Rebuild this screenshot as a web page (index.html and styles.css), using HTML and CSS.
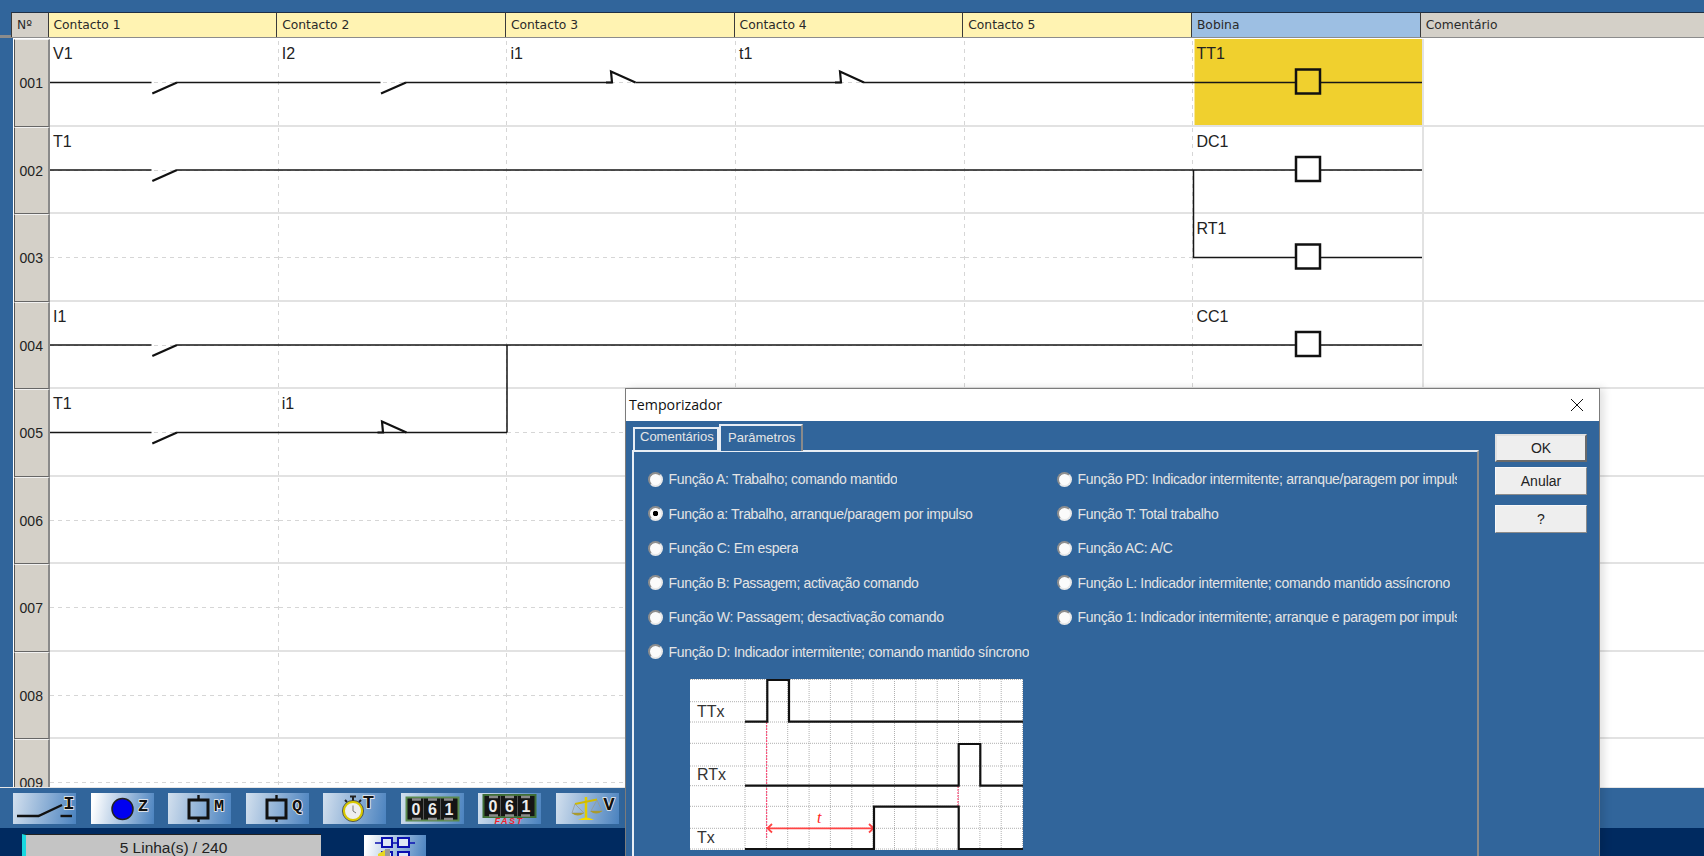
FILE: index.html
```html
<!DOCTYPE html>
<html lang="pt">
<head>
    <meta charset="UTF-8">
    <title>Temporizador</title>
    <link rel="stylesheet" href="styles.css">
</head>
<body>
    <div class="app">
        <div class="head">
            <div class="hcell hnum">Nº</div>
            <div class="hcell hcontact">Contacto 1</div>
            <div class="hcell hcontact">Contacto 2</div>
            <div class="hcell hcontact">Contacto 3</div>
            <div class="hcell hcontact">Contacto 4</div>
            <div class="hcell hcontact">Contacto 5</div>
            <div class="hcell hcoil">Bobina</div>
            <div class="hcell hnote">Comentário</div>
        </div>

        <div class="rows">
            <div class="row">
                <div class="num">001</div>
                <div class="cell">V1</div><div class="cell">I2</div><div class="cell">i1</div><div class="cell">t1</div><div class="cell"></div>
                <div class="cell coil active">TT1</div><div class="cell note"></div>
            </div>
            <div class="row">
                <div class="num">002</div>
                <div class="cell">T1</div><div class="cell"></div><div class="cell"></div><div class="cell"></div><div class="cell"></div>
                <div class="cell coil">DC1</div><div class="cell note"></div>
            </div>
            <div class="row">
                <div class="num">003</div>
                <div class="cell"></div><div class="cell"></div><div class="cell"></div><div class="cell"></div><div class="cell"></div>
                <div class="cell coil">RT1</div><div class="cell note"></div>
            </div>
            <div class="row">
                <div class="num">004</div>
                <div class="cell">I1</div><div class="cell"></div><div class="cell"></div><div class="cell"></div><div class="cell"></div>
                <div class="cell coil">CC1</div><div class="cell note"></div>
            </div>
            <div class="row">
                <div class="num">005</div>
                <div class="cell">T1</div><div class="cell">i1</div><div class="cell"></div><div class="cell"></div><div class="cell"></div>
                <div class="cell coil"></div><div class="cell note"></div>
            </div>
            <div class="row">
                <div class="num">006</div>
                <div class="cell"></div><div class="cell"></div><div class="cell"></div><div class="cell"></div><div class="cell"></div>
                <div class="cell coil"></div><div class="cell note"></div>
            </div>
            <div class="row">
                <div class="num">007</div>
                <div class="cell"></div><div class="cell"></div><div class="cell"></div><div class="cell"></div><div class="cell"></div>
                <div class="cell coil"></div><div class="cell note"></div>
            </div>
            <div class="row">
                <div class="num">008</div>
                <div class="cell"></div><div class="cell"></div><div class="cell"></div><div class="cell"></div><div class="cell"></div>
                <div class="cell coil"></div><div class="cell note"></div>
            </div>
            <div class="row">
                <div class="num">009</div>
                <div class="cell"></div><div class="cell"></div><div class="cell"></div><div class="cell"></div><div class="cell"></div>
                <div class="cell coil"></div><div class="cell note"></div>
            </div>

            <!-- wires of the ladder, drawn over the grid -->
            <svg class="wires" width="1704" height="748" viewBox="0 0 1704 748">
                <path class="wire" d="M50 44.5H151.5M177 44.5H380.5M406 44.5H612M635.5 44.5H841M864 44.5H1422"/>
                <path class="blade" d="M152.3 55.5L177 44.5M381 55.5L406 44.5M606 44.5H612L611 33.5L635.5 44.5M835 44.5H841L840 33.5L864 44.5"/>
                <path class="wire" d="M50 132H151.5M177 132H1422M1193.5 132V219.5H1422"/>
                <path class="blade" d="M152.3 143L177 132"/>
                <path class="wire" d="M50 307H151.5M177 307H1422M507 307V394.5"/>
                <path class="blade" d="M152.3 318L177 307"/>
                <path class="wire" d="M50 394.5H151.5M177 394.5H507"/>
                <path class="blade" d="M152.3 405.5L177 394.5M377.5 394.5H383L382 383.5L406.5 394.5"/>
                <rect class="box on" x="1296" y="31.5" width="24" height="24"/>
                <rect class="box" x="1296" y="119" width="24" height="24"/>
                <rect class="box" x="1296" y="206.5" width="24" height="24"/>
                <rect class="box" x="1296" y="294" width="24" height="24"/>
            </svg>
        </div>

        <div class="toolbar">
            <button class="tool">
                <svg width="63" height="31" viewBox="0 0 63 31">
                    <path class="ink" d="M4 23H25.5L49 12"/>
                    <text class="glyph" x="56" y="16" text-anchor="middle">I</text>
                    <path class="ink" d="M47.5 23H59"/>
                </svg>
            </button>
            <button class="tool bright">
                <svg width="63" height="31" viewBox="0 0 63 31">
                    <circle cx="31.5" cy="16" r="10.5" fill="#0000f0" stroke="#222" stroke-width="1.5"/>
                    <text class="glyph small" x="52" y="18" text-anchor="middle">Z</text>
                </svg>
            </button>
            <button class="tool">
                <svg width="63" height="31" viewBox="0 0 63 31">
                    <path class="ink" d="M30.5 2V7M30.5 25V29"/>
                    <rect class="coilbox" x="21" y="7" width="19" height="18"/>
                    <text class="glyph small" x="51" y="18" text-anchor="middle">M</text>
                </svg>
            </button>
            <button class="tool">
                <svg width="63" height="31" viewBox="0 0 63 31">
                    <path class="ink" d="M30.5 2V7M30.5 25V29"/>
                    <rect class="coilbox" x="21" y="7" width="19" height="18"/>
                    <text class="glyph small" x="51" y="18" text-anchor="middle">Q</text>
                </svg>
            </button>
            <button class="tool">
                <svg width="63" height="31" viewBox="0 0 63 31">
                    <path d="M27 3.5H33M30 3.5V8M22 7L24 9M38 7L36 9" stroke="#222" stroke-width="2" fill="none"/>
                    <circle cx="30" cy="18" r="9.2" fill="#eee" stroke="#d8c800" stroke-width="2.4"/>
                    <circle cx="30" cy="18" r="10.6" fill="none" stroke="#333" stroke-width=".7"/>
                    <path d="M30 18V12.5M30 18L33 20" stroke="#777" stroke-width="1" fill="none"/>
                    <text class="glyph" x="45.5" y="14.5" text-anchor="middle">T</text>
                </svg>
            </button>
            <button class="tool">
                <svg width="63" height="31" viewBox="0 0 63 31">
                    <rect x="5.5" y="4.5" width="52" height="23" fill="#151515" stroke="#5b8a4e" stroke-width="2"/>
                    <path class="ghost" d="M11 6.5H20M27 6.5H36M43 6.5H52M11 26H20M27 26H36M43 26H52"/>
                    <path d="M22.5 5V27M39.5 5V27" stroke="#555" stroke-width="1"/>
                    <text class="digit" x="15" y="22" text-anchor="middle">0</text>
                    <text class="digit" x="31.5" y="22" text-anchor="middle">6</text>
                    <text class="digit" x="48" y="22" text-anchor="middle">1</text>
                </svg>
            </button>
            <button class="tool">
                <svg width="63" height="31" viewBox="0 0 63 31">
                    <rect x="5.5" y="2" width="52" height="22" fill="#151515" stroke="#3f6e36" stroke-width="2"/>
                    <path class="ghost" d="M11 4H20M27 4H36M43 4H52M11 22.5H20M27 22.5H36M43 22.5H52"/>
                    <path d="M22.5 3V23M39.5 3V23" stroke="#555" stroke-width="1"/>
                    <text class="digit" x="15" y="19" text-anchor="middle">0</text>
                    <text class="digit" x="31.5" y="19" text-anchor="middle">6</text>
                    <text class="digit" x="48" y="19" text-anchor="middle">1</text>
                    <text class="fast" x="31" y="30.5" text-anchor="middle">FAST</text>
                </svg>
            </button>
            <button class="tool">
                <svg width="63" height="31" viewBox="0 0 63 31">
                    <path d="M30 4V25" stroke="#e2cc00" stroke-width="2.5"/>
                    <path d="M19 11L41 6.5" stroke="#d0ba00" stroke-width="1.8"/>
                    <path d="M19 11L16 20H28ZM41 7L35 18H46Z" fill="none" stroke="#998" stroke-width=".7"/>
                    <path d="M15.5 20H28Q22 25 15.5 20ZM34 18H46.5Q40 23 34 18Z" fill="#a89a30"/>
                    <path d="M22 27Q30 22 38 27Z" fill="#f2dc00"/>
                    <text class="glyph" x="53" y="16.5" text-anchor="middle">V</text>
                </svg>
            </button>
        </div>

        <div class="status">
            <div class="lines">5 Linha(s) / 240</div>
            <button class="netbtn">
                <svg width="62" height="21" viewBox="0 0 62 21">
                    <path d="M11 8H51" stroke="#0a10b0" stroke-width="1.6"/>
                    <path d="M18 3H28V12H18ZM34 3H45V12H34ZM18 17H28V24H18ZM34 17H45V24H34Z" fill="#dfe8f4" stroke="#0a10b0" stroke-width="2"/>
                    <path d="M21 14H26V21H21Z" fill="#9a9a9a"/>
                    <path d="M14 19L21 15V21H14Z" fill="#e8d820"/>
                </svg>
            </button>
        </div>

        <!-- dialog window -->
        <div class="dialog">
            <div class="titlebar">
                <span>Temporizador</span>
                <svg width="14" height="14" viewBox="0 0 14 14"><path d="M1 1L13 13M13 1L1 13" stroke="#111" stroke-width="1" fill="none"/></svg>
            </div>
            <div class="dlgbody">
                <div class="tabs-wrap">
                    <div class="tabs">
                        <div class="tab">Comentários</div>
                        <div class="tab current">Parâmetros</div>
                    </div>
                    <div class="sheet">
                        <div class="options">
                            <label class="opt"><input type="radio" name="fn"><span>Função A: Trabalho; comando mantido</span></label>
                            <label class="opt"><input type="radio" name="fn"><span>Função PD: Indicador intermitente; arranque/paragem por impulso</span></label>
                            <label class="opt"><input type="radio" name="fn" checked><span>Função a: Trabalho, arranque/paragem por impulso</span></label>
                            <label class="opt"><input type="radio" name="fn"><span>Função T: Total trabalho</span></label>
                            <label class="opt"><input type="radio" name="fn"><span>Função C: Em espera</span></label>
                            <label class="opt"><input type="radio" name="fn"><span>Função AC: A/C</span></label>
                            <label class="opt"><input type="radio" name="fn"><span>Função B: Passagem; activação comando</span></label>
                            <label class="opt"><input type="radio" name="fn"><span>Função L: Indicador intermitente; comando mantido assíncrono</span></label>
                            <label class="opt"><input type="radio" name="fn"><span>Função W: Passagem; desactivação comando</span></label>
                            <label class="opt"><input type="radio" name="fn"><span>Função 1: Indicador intermitente; arranque e paragem por impulso</span></label>
                            <label class="opt wide"><input type="radio" name="fn"><span>Função D: Indicador intermitente; comando mantido síncrono</span></label>
                        </div>
                        <svg class="chart" width="333" height="171" viewBox="0 0 333 171">
                            <rect width="333" height="171" fill="#fff"/>
                            <path class="dots" d="M55 0V171M76.4 0V171M97.7 0V171M119.1 0V171M140.4 0V171M161.8 0V171M183.1 0V171M204.5 0V171M225.8 0V171M247.2 0V171M268.5 0V171M289.9 0V171M311.2 0V171M332.5 0V171"/>
                            <path class="dots" d="M0 .5H333M0 22.7H333M0 43H333M0 64.3H333M0 87H333M0 106.7H333M0 127.3H333M0 149.3H333M0 170H333"/>
                            <path class="redline" d="M76.7 43V160M268 107V127"/>
                            <path class="arrow" d="M78 149.3H183M82 145L77.5 149.3L82 153.5M179 145L183.5 149.3L179 153.5"/>
                            <path class="pulse" d="M55 42.7H77.3V1H99V42.7H333M55 106.7H268.7V65H290.3V106.7H333M55 170H184V127.7H268.7V170H333"/>
                            <text class="chartlabel" x="7" y="38">TTx</text>
                            <text class="chartlabel" x="7" y="100.5">RTx</text>
                            <text class="chartlabel" x="7" y="164">Tx</text>
                            <text class="chart-t" x="127" y="144">t</text>
                        </svg>
                    </div>
                </div>
                <div class="actions">
                    <button class="btn first">OK</button>
                    <button class="btn">Anular</button>
                    <button class="btn last">?</button>
                </div>
            </div>
        </div>
    </div>
</body>
</html>
```

FILE: styles.css
```css
* {
    box-sizing: border-box;
}
html, body {
    margin: 0;
    height: 856px;
    overflow: hidden;
}
body {
    font-family: "Liberation Sans", Arial, sans-serif;
    background-color: #31659b;
}
button {
    font-family: inherit;
    padding: 0;
}
.app {
    position: relative;
    height: 856px;
    display: flex;
    flex-direction: column;
    padding-top: 12px;
}

/* table header */
.head {
    display: grid;
    grid-template-columns: 36.5px repeat(6, 228.7px) 1fr;
    height: 26px;
    padding-left: 11px;
    border-bottom: 3px solid #8c8c8c;
    flex: none;
}
.hcell {
    font-family: "DejaVu Sans", sans-serif;
    font-size: 12.3px;
    line-height: 24px;
    padding-left: 5px;
    color: #2a2a2a;
    border-top: 1px solid #1e2f45;
    border-left: 1.5px solid #3a3a3a;
}
.hnum, .hnote {
    background-color: #d4d0c8;
}
.hcontact {
    background-color: #fff3b2;
}
.hcoil {
    background-color: #9dbfe3;
}

/* ladder rows */
.rows {
    position: relative;
    flex: 1;
    min-height: 0;
    overflow: hidden;
    padding: 1px 0 0 13.5px;
    background: linear-gradient(90deg, #31659b 13.5px, #fff 13.5px);
}
.row {
    display: grid;
    grid-template-columns: 36.5px repeat(5, 228.7px) 230.5px 1fr;
    height: 87.5px;
}
.num {
    background-color: #d4d0c8;
    border-left: 1px solid #555;
    border-right: 2px solid #8a8a8a;
    border-bottom: 1.5px solid #666;
    border-top: 1px solid #f2f2f2;
    font-size: 14px;
    color: #222;
    display: flex;
    align-items: center;
    justify-content: center;
    padding-top: 1px;
}
.cell {
    font-size: 16px;
    line-height: 18px;
    padding: 6px 0 0 3px;
    color: #222;
    border-bottom: 2px solid #e2e2e2;
    background-image:
        repeating-linear-gradient(90deg, #d6d6d6 0 4px, transparent 4px 8px),
        repeating-linear-gradient(0deg, #d6d6d6 0 4px, transparent 4px 8px);
    background-repeat: no-repeat;
    background-position: 0 43px, right 0;
    background-size: 100% 1px, 1px 100%;
}
.coil {
    border-right: 2px solid #e2e2e2;
    background-image: repeating-linear-gradient(90deg, #d6d6d6 0 4px, transparent 4px 8px);
    background-size: 100% 1px;
}
.active {
    background-color: #f0d02e;
    background-image: none;
    box-shadow: inset 1.5px 0 #fff;
}
.note {
    background-image: none;
}
.wires {
    position: absolute;
    left: 0;
    top: 0;
}
.wire {
    fill: none;
    stroke: #161616;
    stroke-width: 1.5;
}
.blade {
    fill: none;
    stroke: #111;
    stroke-width: 2.2;
}
.box {
    fill: #fff;
    stroke: #111;
    stroke-width: 2.5;
}
.box.on {
    fill: #f0d02e;
}

/* button bar */
.toolbar {
    flex: none;
    height: 41px;
    display: flex;
    gap: 14.5px;
    padding: 4.5px 0 0 13px;
    background-color: #31659b;
    border-top: 1px solid #e6e6e6;
}
.tool {
    width: 63px;
    height: 31px;
    border: none;
    background: linear-gradient(100deg, #d3e0ee, #4a82bf);
    flex: none;
}
.tool.bright {
    background: linear-gradient(100deg, #fff 5%, #4a82bf);
}
.tool svg, .netbtn svg {
    display: block;
}
.ink {
    fill: none;
    stroke: #111;
    stroke-width: 2.4;
}
.coilbox {
    fill: none;
    stroke: #111;
    stroke-width: 3;
}
.glyph {
    font-family: "Liberation Mono", monospace;
    font-weight: bold;
    font-size: 19px;
    fill: #111;
    stroke: #eee;
    stroke-width: 1.6;
    paint-order: stroke;
}
.glyph.small {
    font-size: 17px;
}
.digit {
    font-family: "Liberation Sans", sans-serif;
    font-weight: bold;
    font-size: 16px;
    fill: #ececec;
}
.ghost {
    fill: none;
    stroke: #8a8a8a;
    stroke-width: 2.5;
}
.fast {
    font-family: "Liberation Sans", sans-serif;
    font-weight: bold;
    font-style: italic;
    font-size: 9px;
    letter-spacing: 1.5px;
    fill: #f01f2c;
}

/* bottom status */
.status {
    flex: none;
    height: 28px;
    background-color: #002a60;
    display: flex;
    align-items: flex-end;
    padding-left: 22px;
}
.lines {
    width: 299px;
    height: 22px;
    background-color: #c4c4c4;
    border-top: 1px solid #222;
    border-left: 4px solid #19d8e0;
    font-size: 15.5px;
    line-height: 26px;
    text-align: center;
    color: #222;
}
.netbtn {
    width: 62px;
    height: 21px;
    margin-left: 43px;
    border: none;
    overflow: hidden;
    background: linear-gradient(100deg, #fff 5%, #4a82bf);
}

/* dialog */
.dialog {
    position: absolute;
    left: 625px;
    top: 388px;
    width: 975px;
    height: 468px;
    display: flex;
    flex-direction: column;
    background-color: #31659b;
    border: 1px solid #7b7b7b;
    border-bottom: none;
    box-shadow: 4px 0 8px rgba(0, 0, 0, 0.12);
    overflow: hidden;
}
.titlebar {
    flex: none;
    height: 32px;
    background-color: #fff;
    display: flex;
    align-items: center;
    justify-content: space-between;
    padding: 1px 15px 2px 3px;
    font-family: "Open Sans", sans-serif;
    font-size: 14.2px;
    color: #111;
}
.dlgbody {
    flex: 1;
    display: flex;
    min-height: 0;
    padding: 3px 0 0 6px;
}
.tabs-wrap {
    width: 847px;
    flex: none;
}
.tabs {
    display: flex;
    height: 26px;
    align-items: flex-end;
    padding-left: 1px;
    position: relative;
    z-index: 1;
}
.tab {
    width: 86px;
    height: 23px;
    border: 2px solid #e8eef5;
    border-bottom: none;
    color: #e6e6e6;
    font-size: 13px;
    line-height: 15px;
    padding-left: 5px;
}
.tab.current {
    width: 84px;
    height: 27px;
    padding: 4px 0 0 7px;
    border-right-color: #8a8a8a;
    background-color: #31659b;
    margin-bottom: -1px;
}
.sheet {
    height: 500px;
    border: 2px solid #e8eef5;
    border-right-color: #8a8a8a;
    padding-top: 10px;
}
.options {
    display: grid;
    grid-template-columns: 409px 400px;
    grid-auto-rows: 34.5px;
    padding-left: 14px;
}
.opt {
    display: flex;
    align-items: center;
    gap: 5.5px;
    font-size: 14px;
    letter-spacing: -0.33px;
    color: #e4e4e4;
    white-space: nowrap;
    overflow: hidden;
}
.opt.wide {
    grid-column: 1 / 3;
}
.opt span {
    overflow: hidden;
}
.opt input {
    appearance: none;
    flex: none;
    width: 15px;
    height: 15px;
    margin: 0;
    border-radius: 50%;
    border: 2px solid #8e8e8e;
    border-right-color: #e8e8e8;
    border-bottom-color: #e8e8e8;
    background-color: #fbfbfb;
}
.opt input:checked {
    background-image: radial-gradient(circle, #000 0 2.5px, transparent 3px);
}
.chart {
    display: block;
    margin: 10px 0 0 56px;
}
.dots {
    fill: none;
    stroke: #b0b0b0;
    stroke-width: 1;
    stroke-dasharray: 1 1;
}
.pulse {
    fill: none;
    stroke: #111;
    stroke-width: 2.2;
}
.redline {
    fill: none;
    stroke: #f36;
    stroke-width: 1;
    stroke-dasharray: 2 1;
}
.arrow {
    fill: none;
    stroke: #f44;
    stroke-width: 1.8;
}
.chartlabel {
    font-size: 16px;
    fill: #333;
}
.chart-t {
    font-family: "Liberation Serif", serif;
    font-style: italic;
    font-size: 16px;
    fill: #f22;
}
.actions {
    margin-left: 16px;
    width: 92px;
    padding-top: 9.5px;
    display: flex;
    flex-direction: column;
}
.btn {
    width: 92px;
    height: 28px;
    margin-bottom: 10px;
    background-color: #eeeeee;
    border: 1px solid;
    border-color: #f8f8f8 #8a8a8a #8a8a8a #f8f8f8;
    font-size: 14px;
    color: #222;
}
.btn.first {
    margin-bottom: 5px;
    border: 2px solid;
    border-color: #e0e0e0 #6a6a6a #6a6a6a #e0e0e0;
}
```
